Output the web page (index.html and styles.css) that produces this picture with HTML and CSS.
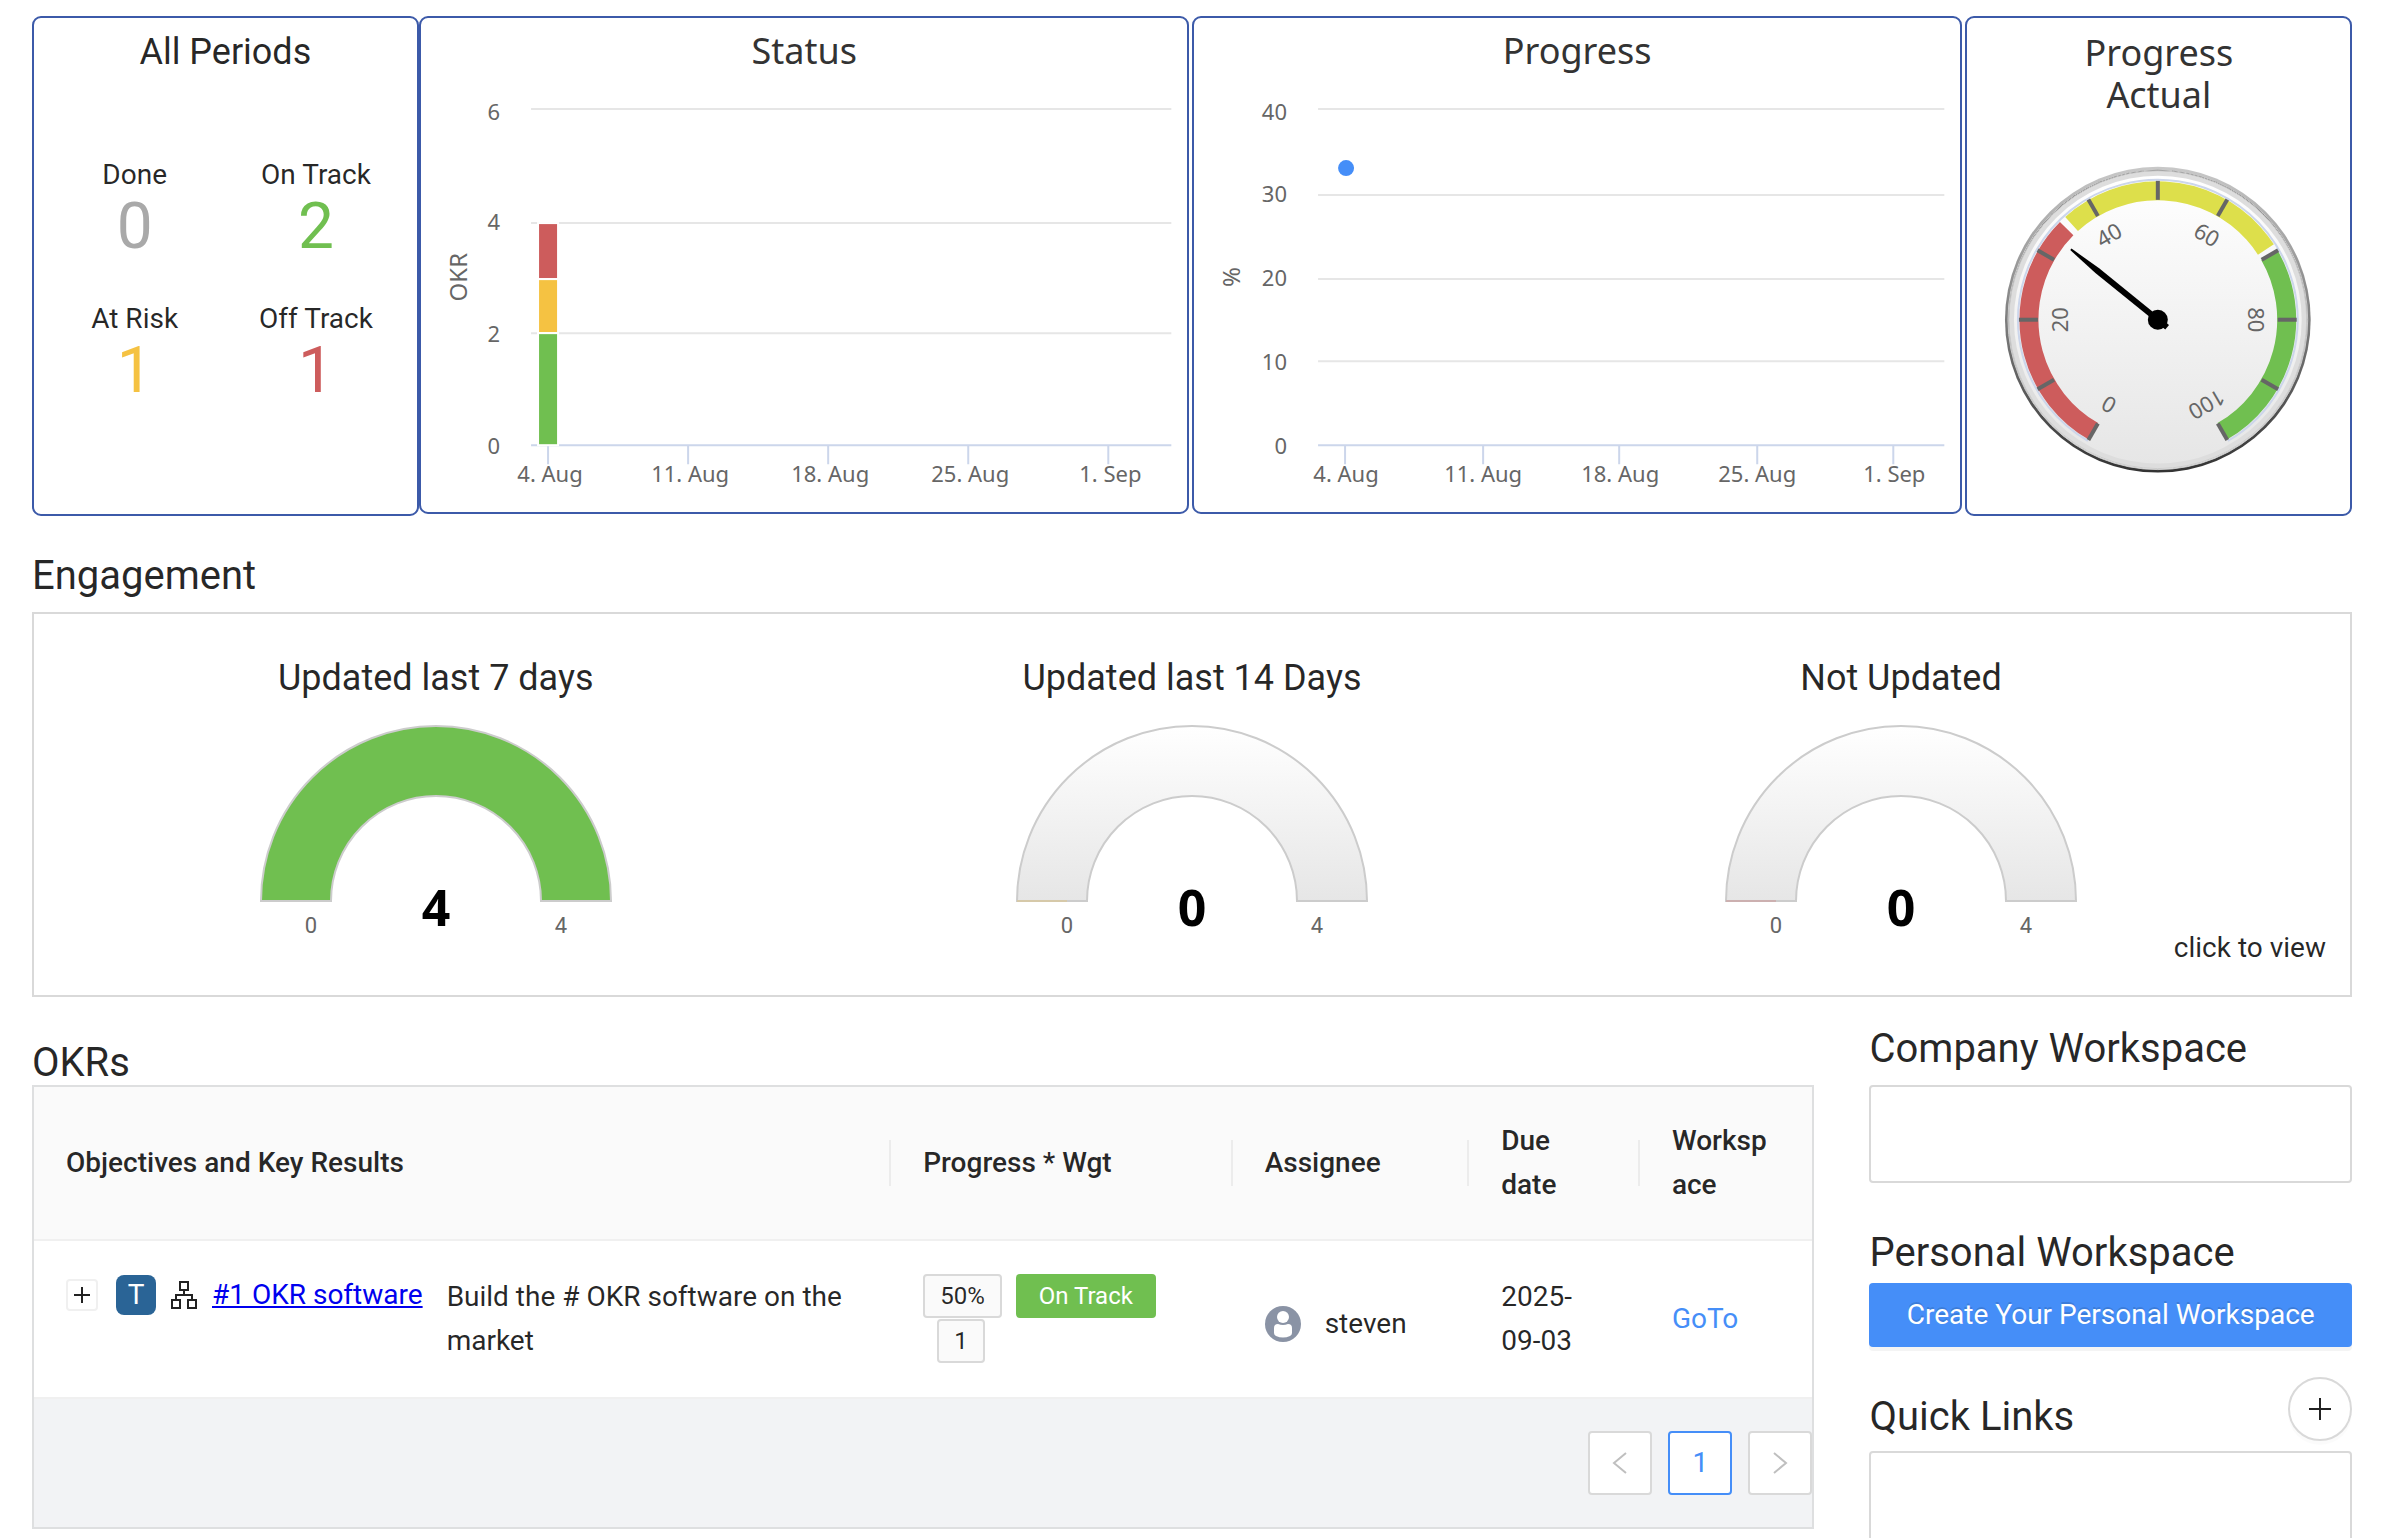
FILE: index.html
```html
<!DOCTYPE html>
<html lang="en">
<head>
    <meta charset="UTF-8">
    <meta name="viewport" content="width=device-width, initial-scale=1.0">
    <title>OKR Dashboard</title>
    <link rel="stylesheet" href="styles.css">
</head>
<body>
    <main class="dashboard">
        <section class="summary">
            <div class="card periods">
                <h3>All Periods</h3>
                <div class="counts">
                    <div class="count">Done<span class="num done">0</span></div>
                    <div class="count">On Track<span class="num on-track">2</span></div>
                    <div class="count">At Risk<span class="num at-risk">1</span></div>
                    <div class="count">Off Track<span class="num off-track">1</span></div>
                </div>
            </div>

            <div class="card chart-card">
                <svg class="chart" viewBox="0 0 766 494" role="img" aria-label="Status">
                    <text class="chart-title" x="383" y="46">Status</text>
                    <path class="grid" d="M110 91H750M110 205H750M110 315H750"/>
                    <path class="axis" d="M110 427H750M127 427V446M267 427V446M407 427V446M547 427V446M687 427V446"/>
                    <g stroke="#fff" stroke-width="2">
                        <rect x="117" y="205" width="20" height="56" fill="#cd5c5c"/>
                        <rect x="117" y="261" width="20" height="54" fill="#f5c242"/>
                        <rect x="117" y="315" width="20" height="112" fill="#70bf50"/>
                    </g>
                    <g class="y-labels">
                        <text x="79" y="102">6</text>
                        <text x="79" y="212">4</text>
                        <text x="79" y="324">2</text>
                        <text x="79" y="436">0</text>
                    </g>
                    <g class="x-labels">
                        <text x="129" y="464">4. Aug</text>
                        <text x="269" y="464">11. Aug</text>
                        <text x="409" y="464">18. Aug</text>
                        <text x="549" y="464">25. Aug</text>
                        <text x="689" y="464">1. Sep</text>
                    </g>
                    <text class="axis-title" transform="translate(46 259) rotate(-90)">OKR</text>
                </svg>
            </div>

            <div class="card chart-card">
                <svg class="chart" viewBox="0 0 766 494" role="img" aria-label="Progress">
                    <text class="chart-title" x="383" y="46">Progress</text>
                    <path class="grid" d="M124 91H750M124 177H750M124 261H750M124 343H750"/>
                    <path class="axis" d="M124 427H750M151 427V446M289 427V446M425 427V446M563 427V446M699 427V446"/>
                    <circle cx="152" cy="150" r="8" fill="#458ef8"/>
                    <g class="y-labels">
                        <text x="93" y="102">40</text>
                        <text x="93" y="184">30</text>
                        <text x="93" y="268">20</text>
                        <text x="93" y="352">10</text>
                        <text x="93" y="436">0</text>
                    </g>
                    <g class="x-labels">
                        <text x="152" y="464">4. Aug</text>
                        <text x="289" y="464">11. Aug</text>
                        <text x="426" y="464">18. Aug</text>
                        <text x="563" y="464">25. Aug</text>
                        <text x="700" y="464">1. Sep</text>
                    </g>
                    <text class="axis-title" transform="translate(46 259) rotate(-90)">%</text>
                </svg>
            </div>

            <div class="card">
                <svg class="chart" viewBox="0 0 383 496" role="img" aria-label="Progress Actual">
                    <defs>
                        <linearGradient id="rim" x1="0" y1="0" x2="0" y2="1">
                            <stop offset="0" stop-color="#c8c8c8"/>
                            <stop offset="1" stop-color="#333"/>
                        </linearGradient>
                        <linearGradient id="rimInner" x1="0" y1="0" x2="0" y2="1">
                            <stop offset="0" stop-color="#333"/>
                            <stop offset="1" stop-color="#fff"/>
                        </linearGradient>
                        <linearGradient id="face" x1="0" y1="0" x2="0" y2="1">
                            <stop offset="0" stop-color="#fff"/>
                            <stop offset="1" stop-color="#e6e6e6"/>
                        </linearGradient>
                    </defs>
                    <text class="chart-title"><tspan x="192" y="48">Progress</tspan><tspan x="192" y="90">Actual</tspan></text>
                    <g transform="translate(191 302)">
                        <circle r="153" fill="url(#rim)"/>
                        <circle r="150" fill="url(#rimInner)" stroke="#ccc"/>
                        <circle r="149" fill="#ddd" stroke="#ccc"/>
                        <circle r="144" fill="url(#face)"/>
                        <!-- scale runs from -150deg to 150deg, 3deg per percent -->
                        <g fill="none">
                            <circle r="140" stroke="#ccd6eb" stroke-width="2" pathLength="360" stroke-dasharray="300 60" transform="rotate(120)"/>
                            <circle r="129" stroke="#cd5c5c" stroke-width="19" pathLength="360" stroke-dasharray="105 255" transform="rotate(120)"/>
                            <circle r="129" stroke="#dddf4b" stroke-width="19" pathLength="360" stroke-dasharray="99 261" transform="rotate(228)"/>
                            <circle r="129" stroke="#70bf50" stroke-width="19" pathLength="360" stroke-dasharray="90 270" transform="rotate(330)"/>
                        </g>
                        <g stroke="#666" stroke-width="4">
                            <path d="M0-139V-120" transform="rotate(-150)"/>
                            <path d="M0-139V-120" transform="rotate(-120)"/>
                            <path d="M0-139V-120" transform="rotate(-90)"/>
                            <path d="M0-139V-120" transform="rotate(-60)"/>
                            <path d="M0-139V-120" transform="rotate(-30)"/>
                            <path d="M0-139V-120"/>
                            <path d="M0-139V-120" transform="rotate(30)"/>
                            <path d="M0-139V-120" transform="rotate(60)"/>
                            <path d="M0-139V-120" transform="rotate(90)"/>
                            <path d="M0-139V-120" transform="rotate(120)"/>
                            <path d="M0-139V-120" transform="rotate(150)"/>
                        </g>
                        <g class="x-labels">
                            <text y="-90" transform="rotate(-150)">0</text>
                            <text y="-90" transform="rotate(-90)">20</text>
                            <text y="-90" transform="rotate(-30)">40</text>
                            <text y="-90" transform="rotate(30)">60</text>
                            <text y="-90" transform="rotate(90)">80</text>
                            <text y="-90" transform="rotate(150)">100</text>
                        </g>
                        <path d="M-3 12L-3-78L-1-112H1L3-78V12Z" transform="rotate(-51)"/>
                        <circle r="10"/>
                    </g>
                </svg>
            </div>
        </section>

        <h2 class="engagement-title">Engagement</h2>
        <section class="engagement">
            <div class="gauge">
                <h3>Updated last 7 days</h3>
                <svg viewBox="-180 -180 360 224" role="img" aria-label="4 of 4">
                    <path d="M-175 0A175 175 0 0 1 175 0H105A105 105 0 0 0 -105 0Z" fill="#70bf50" stroke="#ccc" stroke-width="2"/>
                    <text class="gauge-value" y="25">4</text>
                    <text class="gauge-end" x="-125" y="32">0</text>
                    <text class="gauge-end" x="125" y="32">4</text>
                </svg>
            </div>
            <div class="gauge">
                <h3>Updated last 14 Days</h3>
                <svg viewBox="-180 -180 360 224" role="img" aria-label="0 of 4">
                    <path d="M-175 0A175 175 0 0 1 175 0H105A105 105 0 0 0 -105 0Z" fill="url(#face)" stroke="#ccc" stroke-width="2"/>
                    <path d="M-175 0H-125" stroke="#f5c242" stroke-opacity=".5"/>
                    <text class="gauge-value" y="25">0</text>
                    <text class="gauge-end" x="-125" y="32">0</text>
                    <text class="gauge-end" x="125" y="32">4</text>
                </svg>
            </div>
            <div class="gauge">
                <h3>Not Updated</h3>
                <svg viewBox="-180 -180 360 224" role="img" aria-label="0 of 4">
                    <path d="M-175 0A175 175 0 0 1 175 0H105A105 105 0 0 0 -105 0Z" fill="url(#face)" stroke="#ccc" stroke-width="2"/>
                    <path d="M-175 0H-125" stroke="#cd5c5c" stroke-opacity=".5"/>
                    <text class="gauge-value" y="25">0</text>
                    <text class="gauge-end" x="-125" y="32">0</text>
                    <text class="gauge-end" x="125" y="32">4</text>
                </svg>
            </div>
            <span class="hint">click to view</span>
        </section>

        <div class="lower">
            <section class="okrs">
                <h2>OKRs</h2>
                <div class="okr-box">
                    <table class="okr-table">
                        <colgroup>
                            <col class="col-objective">
                            <col class="col-progress">
                            <col class="col-assignee">
                            <col class="col-due">
                            <col>
                        </colgroup>
                        <thead>
                            <tr>
                                <th>Objectives and Key Results</th>
                                <th>Progress * Wgt</th>
                                <th>Assignee</th>
                                <th>Due date</th>
                                <th>Workspace</th>
                            </tr>
                        </thead>
                        <tbody>
                            <tr>
                                <td>
                                    <div class="objective">
                                        <button type="button" class="expand" aria-label="Expand row">
                                            <svg viewBox="0 0 18 18" width="18" height="18"><path d="M9 1V17M1 9H17" stroke="#222" stroke-width="2"/></svg>
                                        </button>
                                        <span class="type-badge">T</span>
                                        <svg class="tree-icon" viewBox="0 0 26 28" width="26" height="28" fill="none" stroke="#222" stroke-width="2">
                                            <path d="M9 1H17V9H9ZM1 19H9V27H1ZM17 19H25V27H17ZM13 9V14M5 19V14H21V19"/>
                                        </svg>
                                        <a href="#okr-1" class="okr-link">#1 OKR software</a>
                                        <span class="description">Build the # OKR software on the market</span>
                                    </div>
                                </td>
                                <td>
                                    <div class="tags">
                                        <span class="tag">50%</span>
                                        <span class="tag tag-status">On Track</span>
                                        <span class="tag tag-weight">1</span>
                                    </div>
                                </td>
                                <td>
                                    <div class="assignee">
                                        <svg viewBox="0 0 36 36" width="36" height="36">
                                            <circle cx="18" cy="18" r="18" fill="#8a93a5"/>
                                            <circle cx="18" cy="11" r="6" fill="#fff"/>
                                            <path d="M9 22Q9 18 13 18Q18 20 23 18Q27 18 27 22V27Q27 29 25 30Q18 33 11 30Q9 29 9 27Z" fill="#fff"/>
                                        </svg>
                                        steven
                                    </div>
                                </td>
                                <td>2025-09-03</td>
                                <td><a href="#workspace" class="goto">GoTo</a></td>
                            </tr>
                        </tbody>
                    </table>
                    <nav class="pagination" aria-label="Pages">
                        <button type="button" class="page" aria-label="Previous page" disabled>
                            <svg viewBox="0 0 16 22" width="16" height="22"><path d="M14 1L2 11L14 21" fill="none" stroke="#bfbfbf" stroke-width="2"/></svg>
                        </button>
                        <button type="button" class="page active">1</button>
                        <button type="button" class="page" aria-label="Next page" disabled>
                            <svg viewBox="0 0 16 22" width="16" height="22"><path d="M2 1L14 11L2 21" fill="none" stroke="#bfbfbf" stroke-width="2"/></svg>
                        </button>
                    </nav>
                </div>
            </section>

            <aside class="side">
                <h2>Company Workspace</h2>
                <div class="panel company-panel"></div>
                <h2>Personal Workspace</h2>
                <button type="button" class="create">Create Your Personal Workspace</button>
                <div class="links-head">
                    <h2>Quick Links</h2>
                    <button type="button" class="add" aria-label="Add link">
                        <svg viewBox="0 0 24 24" width="24" height="24"><path d="M12 1V23M1 12H23" stroke="#222" stroke-width="2"/></svg>
                    </button>
                </div>
                <div class="panel links-panel"></div>
            </aside>
        </div>
    </main>
</body>
</html>
```
FILE: styles.css
```css
* {
    box-sizing: border-box;
}
body {
    margin: 0;
    font-family: Roboto, sans-serif;
    font-size: 28px;
    line-height: 44px;
    color: rgba(0, 0, 0, 0.85);
    background-color: #fff;
}
h2, h3 {
    margin: 0;
    font-weight: 400;
}
h2 {
    font-size: 40px;
    line-height: 44px;
}
h3 {
    font-size: 36px;
    line-height: 56px;
    text-align: center;
}
button {
    font: inherit;
    cursor: pointer;
    padding: 0;
}
svg {
    display: block;
}
.dashboard {
    height: 100vh;
    overflow: hidden;
    padding: 16px 40px 0 32px;
}

/* Top cards */
.summary {
    display: grid;
    grid-template-columns: 1fr 2fr 2fr 1fr;
    align-items: start;
}
.card {
    border: 2px solid #3c5aa9;
    border-radius: 9px;
}
.chart-card {
    margin-right: 3px;
}
.periods {
    align-self: stretch;
    padding: 6px 10px;
}
.counts {
    display: grid;
    grid-template-columns: 1fr 1fr;
    row-gap: 40px;
    margin-top: 73px;
    text-align: center;
}
.num {
    display: block;
    font-size: 64px;
    line-height: 60px;
}
.done { color: #a9a9a9; }
.on-track { color: #70bf50; }
.at-risk { color: #f5c242; }
.off-track { color: #cd5c5c; }

/* Charts */
.chart {
    width: 100%;
    height: auto;
    font-family: "Noto Sans", "Open Sans", sans-serif;
}
.chart-title {
    font-size: 36px;
    fill: #333;
    text-anchor: middle;
}
.grid {
    stroke: #e6e6e6;
    stroke-width: 2;
}
.axis {
    stroke: #ccd6eb;
    stroke-width: 2;
}
.x-labels, .y-labels {
    font-size: 22px;
    fill: #666;
    text-anchor: middle;
}
.y-labels {
    text-anchor: end;
}
.axis-title {
    font-size: 24px;
    fill: #666;
    text-anchor: middle;
}

/* Engagement */
.engagement-title {
    margin: 38px 0 14px;
}
.engagement {
    display: grid;
    grid-template-columns: minmax(0, 17fr) minmax(0, 15fr) minmax(0, 15fr) minmax(0, 2fr);
    border: 2px solid #d9d9d9;
    padding: 36px 0 25px;
}
.gauge {
    padding-bottom: 25px;
}
.gauge svg {
    width: 360px;
    margin: 15px auto 0;
}
.gauge-value {
    font-family: "Noto Sans", "Open Sans", sans-serif;
    font-size: 50px;
    font-weight: 700;
    text-anchor: middle;
}
.gauge-end {
    font-size: 22px;
    fill: #666;
    text-anchor: middle;
}
.hint {
    align-self: end;
    justify-self: end;
    padding-right: 24px;
    white-space: nowrap;
}

/* OKR table and side column */
.lower {
    display: grid;
    grid-template-columns: 1fr 20.8%;
    column-gap: 55px;
}
.okrs h2 {
    margin-top: 44px;
}
.okr-box {
    border: 2px solid #dedfe0;
    background-color: #f2f3f5;
}
.okr-table {
    width: 100%;
    table-layout: fixed;
    border-collapse: separate;
    border-spacing: 0;
}
.col-objective { width: 48.2%; }
.col-progress { width: 19.2%; }
.col-assignee { width: 13.3%; }
.col-due { width: 9.6%; }
.okr-table th,
.okr-table td {
    padding: 32px;
    border-bottom: 2px solid #f0f0f0;
    text-align: left;
    vertical-align: middle;
    overflow-wrap: break-word;
}
.okr-table th {
    font-weight: 500;
    background: linear-gradient(#ececec, #ececec) right center / 2px 46px no-repeat #fafafa;
}
.okr-table th:last-child {
    background: #fafafa;
}
.okr-table td {
    background-color: #fff;
}
.objective {
    display: flex;
    align-items: flex-start;
    min-height: 92px;
}
.expand {
    display: flex;
    align-items: center;
    justify-content: center;
    width: 32px;
    height: 32px;
    margin: 6px 18px 0 0;
    border: 2px solid #f0f0f0;
    border-radius: 4px;
    background-color: #fff;
}
.type-badge {
    width: 40px;
    margin-top: 2px;
    border-radius: 8px;
    background-color: #2a6496;
    color: #fff;
    line-height: 40px;
    text-align: center;
}
.tree-icon {
    margin: 8px 15px 0;
}
.okr-link {
    color: #0000ee;
    white-space: nowrap;
}
.description {
    flex: 1;
    margin: 2px 0 0 24px;
}
.tags {
    display: flex;
    flex-wrap: wrap;
    gap: 1px 14px;
}
.tag {
    padding: 0 15px;
    border: 2px solid #d9d9d9;
    border-radius: 4px;
    background-color: #fafafa;
    font-size: 24px;
    line-height: 40px;
}
.tag-status {
    padding: 0 21px;
    border-color: #70bf50;
    background-color: #70bf50;
    color: #fff;
}
.tag-weight {
    margin-left: 14px;
}
.assignee {
    display: flex;
    align-items: center;
    gap: 24px;
    padding-top: 10px;
}
.goto {
    color: #458ef8;
    text-decoration: none;
}
.pagination {
    display: flex;
    justify-content: flex-end;
    gap: 16px;
    padding: 32px 0;
}
.page {
    display: flex;
    align-items: center;
    justify-content: center;
    width: 64px;
    height: 64px;
    border: 2px solid #d9d9d9;
    border-radius: 4px;
    background-color: #fff;
}
.page.active {
    border-color: #458ef8;
    color: #458ef8;
}
.side h2 {
    margin-top: 30px;
}
.panel {
    border: 2px solid #d9d9d9;
    border-radius: 4px;
}
.company-panel {
    height: 98px;
    margin: 14px 0 48px;
}
.create {
    display: block;
    width: 100%;
    height: 64px;
    margin-top: 8px;
    border: none;
    border-radius: 4px;
    background-color: #458ef8;
    color: #fff;
    text-shadow: 0 -2px 0 rgba(0, 0, 0, 0.12);
    box-shadow: 0 4px 0 rgba(0, 0, 0, 0.045);
}
.links-head {
    display: flex;
    align-items: flex-start;
    justify-content: space-between;
    margin-top: 30px;
}
.links-head h2 {
    margin-top: 18px;
}
.add {
    display: flex;
    align-items: center;
    justify-content: center;
    width: 64px;
    height: 64px;
    border: 2px solid #d9d9d9;
    border-radius: 50%;
    background-color: #fff;
    box-shadow: 0 4px 0 rgba(0, 0, 0, 0.015);
}
.links-panel {
    min-height: 120px;
    margin-top: 10px;
}
```
